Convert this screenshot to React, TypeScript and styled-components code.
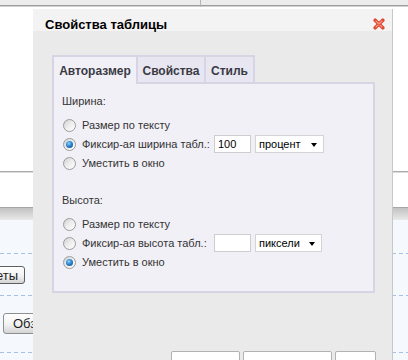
import React from "react";
import styled, { createGlobalStyle } from "styled-components";

const GlobalStyle = createGlobalStyle`
  html, body { margin: 0; padding: 0; background: #ffffff; }
  body {
    width: 408px;
    height: 360px;
    overflow: hidden;
    font-family: "Liberation Sans", Arial, sans-serif;
  }
`;

const Page = styled.div`
  position: relative;
  width: 408px;
  height: 360px;
  overflow: hidden;
  background: #ffffff;
  display: flex;
  flex-direction: column;
`;

const TopStrip = styled.div`
  flex: none;
  height: 7px;
  display: flex;
  background: linear-gradient(#ececec 0 5px, #9d9d9d 5px 6px, #d2d2d2 6px 7px);
`;

const TopCell = styled.div<{ $w: number }>`
  flex: none;
  width: ${(p) => p.$w}px;
  height: 7px;
  border-right: 1px solid #b4b4b4;
  margin-right: 2px;
`;

const WhiteZone = styled.div<{ $h: number }>`
  flex: none;
  height: ${(p) => p.$h}px;
  background: #ffffff;
`;

const Rule = styled.div`
  flex: none;
  height: 2px;
  background: linear-gradient(#ababab 0 1px, #dcdcdc 1px 2px);
`;

const Toolbar = styled.div`
  flex: none;
  height: 12px;
  border-top: 1px solid #a6a6a6;
  background: linear-gradient(#c2c2c2, #e9e9e9);
`;

const BlueArea = styled.div`
  flex: 1;
  background: #f5f8fd;
  display: flex;
  flex-direction: column;
`;

const BlueRow = styled.div<{ $h: number }>`
  flex: none;
  height: ${(p) => p.$h}px;
  box-sizing: border-box;
  background: repeating-linear-gradient(to right, #a9c0e4 0 4px, transparent 4px 7px) bottom / 100% 1px no-repeat;
  display: flex;
  align-items: flex-start;
`;

const PageButton = styled.div<{ $top: number; $left: number; $w: number; $h: number; $light?: boolean }>`
  margin-top: ${(p) => p.$top}px;
  margin-left: ${(p) => p.$left}px;
  width: ${(p) => p.$w}px;
  height: ${(p) => p.$h}px;
  box-sizing: border-box;
  border: 1px solid ${(p) => (p.$light ? "#8f8f8f" : "#5f5f5f")};
  border-radius: 3px;
  background: linear-gradient(#ffffff, #f2f2f2 55%, #d4d4d4);
  font-size: 13px;
  color: #1e1e1e;
  display: flex;
  align-items: center;
`;

const PageButtonText = styled.span<{ $right?: boolean; $pad: number }>`
  flex: 1;
  text-align: ${(p) => (p.$right ? "right" : "left")};
  padding-left: ${(p) => (p.$right ? 0 : p.$pad)}px;
  padding-right: ${(p) => (p.$right ? p.$pad : 0)}px;
  white-space: nowrap;
`;

/* ---------- dialog ---------- */

const Dialog = styled.div`
  position: absolute;
  left: 33px;
  top: 9px;
  width: 360px;
  height: 360px;
  box-sizing: border-box;
  background: #eaeaea;
  border-right: 1px solid #c8c8c8;
  display: flex;
  flex-direction: column;
`;

const TitleBar = styled.div`
  flex: none;
  height: 22px;
  background: #f3f3f3;
  display: flex;
  justify-content: space-between;
  align-items: flex-start;
  padding-left: 12px;
`;

const TitleText = styled.div`
  margin-top: 9px;
  font-size: 13px;
  line-height: 13px;
  font-weight: bold;
  color: #000000;
  white-space: nowrap;
`;

const CloseIcon = styled.svg`
  margin-top: 9px;
  margin-right: 7px;
  width: 12px;
  height: 12px;
  flex: none;
`;

const DialogBody = styled.div`
  flex: 1;
  padding: 24px 17px 0 19px;
  display: flex;
  flex-direction: column;
`;

const TabsRow = styled.div`
  flex: none;
  height: 29px;
  display: flex;
  margin-bottom: -2px;
  position: relative;
  z-index: 1;
`;

const Tab = styled.div<{ $w: number; $active?: boolean }>`
  flex: none;
  width: ${(p) => p.$w}px;
  box-sizing: border-box;
  margin-right: -2px;
  border: 2px solid #d7d5e4;
  border-bottom: ${(p) => (p.$active ? "none" : "2px solid #d7d5e4")};
  background: ${(p) => (p.$active ? "#f1f0f7" : "#e8e7f1")};
  padding-top: 6px;
  font-size: 12px;
  line-height: 16px;
  font-weight: bold;
  color: #3a3a44;
  text-align: center;
  white-space: nowrap;
`;

const Panel = styled.div`
  flex: none;
  height: 211px;
  box-sizing: border-box;
  border: 2px solid #d7d5e4;
  background: #f1f0f7;
  padding: 8px 0 0 8px;
  display: flex;
  flex-direction: column;
`;

const Section = styled.div<{ $gap: number }>`
  margin-top: ${(p) => p.$gap}px;
  display: flex;
  flex-direction: column;
`;

const SectionLabel = styled.div`
  font-size: 11px;
  line-height: 18px;
  color: #333333;
  margin-bottom: 6px;
`;

const OptionRow = styled.div<{ $h: number }>`
  height: ${(p) => p.$h}px;
  display: flex;
  align-items: center;
  padding-left: 1px;
  font-size: 11px;
  color: #333333;
`;

const Radio = styled.span<{ $checked?: boolean }>`
  flex: none;
  width: 13px;
  height: 13px;
  box-sizing: border-box;
  border-radius: 50%;
  border: 1px solid #9b9b9b;
  background: linear-gradient(135deg, #cfcfcf 0%, #ececec 45%, #ffffff 100%);
  margin-right: 6px;
  display: flex;
  align-items: center;
  justify-content: center;

  &::after {
    content: "";
    display: ${(p) => (p.$checked ? "block" : "none")};
    width: 7px;
    height: 7px;
    border-radius: 50%;
    background: radial-gradient(circle at 40% 35%, #8fd0ff 0%, #2a86d0 45%, #0b3f73 100%);
  }
`;

const OptionText = styled.span<{ $w?: number }>`
  flex: none;
  width: ${(p) => (p.$w ? `${p.$w}px` : "auto")};
  line-height: 18px;
  white-space: nowrap;
`;

const TextInput = styled.div`
  flex: none;
  width: 37px;
  height: 18px;
  box-sizing: border-box;
  border: 1px solid #cdcdcd;
  background: #ffffff;
  padding: 0 3px;
  font-size: 11px;
  line-height: 16px;
  color: #000000;
  margin-right: 4px;
`;

const Select = styled.div<{ $w: number }>`
  flex: none;
  width: ${(p) => p.$w}px;
  height: 18px;
  box-sizing: border-box;
  border: 1px solid #d4d4d4;
  background: #ffffff;
  padding: 0 6px 0 3px;
  display: flex;
  align-items: center;
  justify-content: space-between;
  font-size: 11px;
  color: #000000;
`;

const SelectArrow = styled.span`
  width: 0;
  height: 0;
  border-left: 3.5px solid transparent;
  border-right: 3.5px solid transparent;
  border-top: 4px solid #000000;
  margin-top: 2px;
`;

const ButtonsRow = styled.div`
  flex: none;
  margin-top: 58px;
  padding-left: 119px;
  display: flex;
  gap: 3px;
`;

const DialogButton = styled.div<{ $w: number }>`
  flex: none;
  width: ${(p) => p.$w}px;
  height: 24px;
  box-sizing: border-box;
  border: 1px solid #b2b2b2;
  border-radius: 2px 2px 0 0;
  background: #ffffff;
`;

export default function App() {
  return (
    <>
      <GlobalStyle />
      <Page>
        <TopStrip>
          <TopCell $w={200} />
        </TopStrip>
        <WhiteZone $h={164} />
        <Rule />
        <WhiteZone $h={34} />
        <Toolbar />
        <BlueArea>
          <BlueRow $h={34} />
          <BlueRow $h={42}>
            <PageButton $top={12} $left={-8} $w={33} $h={18}>
              <PageButtonText $right $pad={6}>еты</PageButtonText>
            </PageButton>
          </BlueRow>
          <BlueRow $h={57}>
            <PageButton $top={17} $left={3} $w={80} $h={21} $light>
              <PageButtonText $pad={9}>Обзор</PageButtonText>
            </PageButton>
          </BlueRow>
          <BlueRow $h={20} />
        </BlueArea>

        <Dialog>
          <TitleBar>
            <TitleText>Свойства таблицы</TitleText>
            <CloseIcon viewBox="0 0 12 12">
              <path d="M2.2 2.2 L9.8 9.8 M9.8 2.2 L2.2 9.8" stroke="#df4a34" strokeWidth="3.6" strokeLinecap="round" fill="none" />
              <path d="M3 3 L9 9 M9 3 L3 9" stroke="#f59a88" strokeWidth="1.1" strokeLinecap="round" fill="none" />
            </CloseIcon>
          </TitleBar>
          <DialogBody>
            <TabsRow>
              <Tab $w={86} $active>Авторазмер</Tab>
              <Tab $w={70}>Свойства</Tab>
              <Tab $w={51}>Стиль</Tab>
            </TabsRow>
            <Panel>
              <Section $gap={0}>
                <SectionLabel>Ширина:</SectionLabel>
                <OptionRow $h={18}>
                  <Radio />
                  <OptionText>Размер по тексту</OptionText>
                </OptionRow>
                <OptionRow $h={20}>
                  <Radio $checked />
                  <OptionText $w={132}>Фиксир-ая ширина табл.:</OptionText>
                  <TextInput>100</TextInput>
                  <Select $w={69}>
                    <span>процент</span>
                    <SelectArrow />
                  </Select>
                </OptionRow>
                <OptionRow $h={18}>
                  <Radio />
                  <OptionText>Уместить в окно</OptionText>
                </OptionRow>
              </Section>
              <Section $gap={19}>
                <SectionLabel>Высота:</SectionLabel>
                <OptionRow $h={18}>
                  <Radio />
                  <OptionText>Размер по тексту</OptionText>
                </OptionRow>
                <OptionRow $h={20}>
                  <Radio />
                  <OptionText $w={132}>Фиксир-ая высота табл.:</OptionText>
                  <TextInput />
                  <Select $w={67}>
                    <span>пиксели</span>
                    <SelectArrow />
                  </Select>
                </OptionRow>
                <OptionRow $h={18}>
                  <Radio $checked />
                  <OptionText>Уместить в окно</OptionText>
                </OptionRow>
              </Section>
            </Panel>
            <ButtonsRow>
              <DialogButton $w={69} />
              <DialogButton $w={89} />
              <DialogButton $w={41} />
            </ButtonsRow>
          </DialogBody>
        </Dialog>
      </Page>
    </>
  );
}
